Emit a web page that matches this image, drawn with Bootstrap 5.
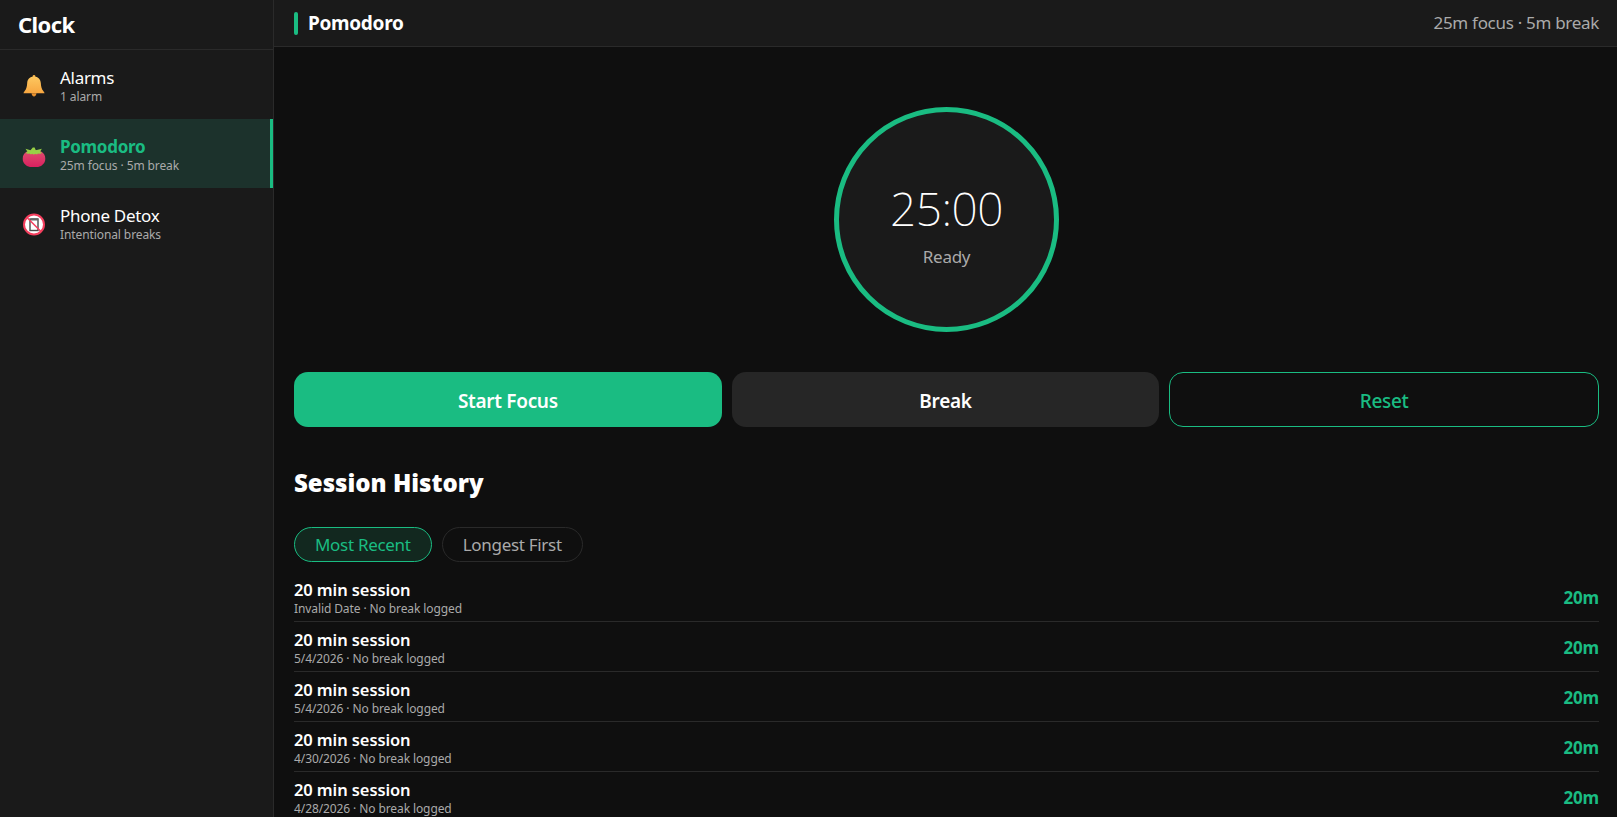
<!DOCTYPE html>
<html lang="en">
<head>
    <meta charset="UTF-8">
    <meta name="viewport" content="width=device-width, initial-scale=1.0">
    <title>Clock</title>
    <link href="https://cdn.jsdelivr.net/npm/bootstrap@5.3.0/dist/css/bootstrap.min.css" rel="stylesheet">
    <style>
        html, body {
            height: 100%;
            overflow: hidden;
        }
        body {
            background-color: #0f0f0f;
            color: #fff;
            font-family: "Noto Sans", "Open Sans", sans-serif;
        }
        .app-shell {
            height: 817px;
        }
        .side-panel {
            width: 274px;
            flex: 0 0 274px;
            background-color: #1a1a1a;
            border-right: 1px solid #2a2a2a;
        }
        .side-brand {
            height: 50px;
            padding: 0 18px;
            font-size: 22px;
            font-weight: 700;
            letter-spacing: -0.6px;
            border-bottom: 1px solid #2a2a2a;
        }
        .side-item {
            height: 69px;
            padding: 0 19px 0 22px;
            gap: 14px;
            border-right: 3px solid transparent;
        }
        .side-item.active-item {
            background-color: #1c322c;
            border-right-color: #1abc82;
        }
        .side-icon {
            width: 24px;
            height: 24px;
            flex: 0 0 24px;
            margin-top: 2px;
        }
        .side-text {
            padding-top: 2px;
        }
        .side-title {
            font-size: 17px;
            line-height: 22px;
            letter-spacing: -0.3px;
        }
        .active-item .side-title {
            color: #1abc82;
            font-weight: 700;
        }
        .side-sub {
            font-size: 12px;
            line-height: 16px;
            color: #aaa;
            letter-spacing: -0.1px;
        }
        .top-strip {
            height: 47px;
            padding: 0 18px 0 20px;
            background-color: #1a1a1a;
            border-bottom: 1px solid #2a2a2a;
        }
        .strip-mark {
            width: 4px;
            height: 23px;
            border-radius: 2px;
            background-color: #1abc82;
            margin-right: 10px;
        }
        .strip-title {
            font-size: 19px;
            font-weight: 700;
            letter-spacing: -0.3px;
        }
        .strip-meta {
            font-size: 17px;
            color: #aaa;
            letter-spacing: -0.3px;
        }
        .page-pad {
            padding: 0 18px 0 20px;
        }
        .timer-ring {
            width: 225px;
            height: 225px;
            margin: 60px auto 40px;
            padding-top: 11px;
            border: 5px solid #1abc82;
            border-radius: 50%;
            background-color: #1a1a1a;
        }
        .timer-value {
            font-size: 46px;
            font-weight: 200;
            line-height: 56px;
            letter-spacing: -0.5px;
        }
        .timer-state {
            font-size: 17px;
            color: #aaa;
            margin-top: 8px;
            letter-spacing: -0.3px;
        }
        .action-row {
            gap: 10px;
        }
        .action-btn {
            flex: 1 1 0;
            height: 55px;
            padding-top: 9px;
            border-radius: 14px;
            font-size: 19px;
            font-weight: 600;
            color: #fff;
            border: 0;
            letter-spacing: -0.3px;
        }
        .action-btn.focus-btn {
            background-color: #1abc82;
        }
        .action-btn.break-btn {
            background-color: #262626;
        }
        .action-btn.reset-btn {
            background-color: transparent;
            border: 1px solid #1abc82;
            color: #1abc82;
            font-weight: 500;
        }
        .history-title {
            font-size: 24px;
            font-weight: 900;
            line-height: 32px;
            margin: 40px 0 28px;
        }
        .sort-row {
            gap: 10px;
            margin-bottom: 10px;
        }
        .sort-pill {
            height: 35px;
            padding: 0 20px;
            border-radius: 18px;
            font-size: 17px;
            color: #aaa;
            border: 1px solid #2a2a2a;
            background-color: transparent;
            letter-spacing: -0.3px;
        }
        .sort-pill.picked {
            color: #1abc82;
            border-color: #1abc82;
            background-color: #12281f;
        }
        .history-row {
            height: 50px;
            border-bottom: 1px solid #2a2a2a;
        }
        .row-text {
            padding-top: 4px;
        }
        .row-title {
            font-size: 16.5px;
            font-weight: 600;
            line-height: 20px;
            letter-spacing: -0.1px;
        }
        .row-sub {
            margin-top: 1px;
            font-size: 12px;
            line-height: 16px;
            color: #aaa;
            letter-spacing: -0.1px;
        }
        .row-mins {
            padding-top: 2px;
            font-size: 17px;
            font-weight: 700;
            color: #1abc82;
            letter-spacing: -0.2px;
        }
    </style>
</head>
<body>
    <div class="app-shell d-flex">
        <aside class="side-panel d-flex flex-column">
            <div class="side-brand d-flex align-items-center">Clock</div>

            <div class="side-item d-flex align-items-center">
                <svg class="side-icon" viewBox="0 0 24 24">
                    <defs><linearGradient id="bellFill" x1="0" y1="0" x2="0" y2="1"><stop offset="0" stop-color="#fdc860"/><stop offset="1" stop-color="#f7a640"/></linearGradient></defs>
                    <circle cx="12" cy="2.400" r="1.400" fill="#f5b24a"/>
                    <path d="M12 2.500c-4.400 0-6.600 3-6.800 6.500-.2 3.600-.8 6-2.500 8.100-.7.900-1.200 1.600-1.200 2.200h21c0-.6-.5-1.300-1.200-2.200-1.700-2.100-2.300-4.500-2.500-8.100-.2-3.500-2.400-6.500-6.800-6.500z" fill="url(#bellFill)"/>
                    <path d="M9.500 19.300h5c-.2 1.900-1.200 3.200-2.500 3.200s-2.300-1.300-2.500-3.200z" fill="#e8912f"/>
                </svg>
                <div class="side-text">
                    <div class="side-title">Alarms</div>
                    <div class="side-sub">1 alarm</div>
                </div>
            </div>

            <div class="side-item active-item d-flex align-items-center">
                <svg class="side-icon" viewBox="0 0 24 24">
                    <defs><linearGradient id="tomatoFill" x1="0" y1="0" x2="0" y2="1"><stop offset="0" stop-color="#e04f70"/><stop offset="1" stop-color="#d81f5f"/></linearGradient></defs>
                    <path d="M12 7c5 0 11.300 1.800 11.300 8.700 0 5.500-5 8.800-11.300 8.800S.700 21.200.700 15.700C.700 8.800 7 7 12 7z" fill="url(#tomatoFill)"/>
                    <path d="M3.500 5.800l5 1.400 2.300-2.700h1.800l1.200 2.700 6-1.400-1.600 2.900 1.800 1.300c-1.400 1-2.800.6-4 .4-.9 1.200-2 1.200-2.800.3-.8 1.100-2.100 1.100-3 0-1 .8-2 .8-2.800-.1-1.200.3-2.600.3-3.700-.6l1.800-1.200z" fill="#98d046"/>
                </svg>
                <div class="side-text">
                    <div class="side-title">Pomodoro</div>
                    <div class="side-sub">25m focus · 5m break</div>
                </div>
            </div>

            <div class="side-item d-flex align-items-center">
                <svg class="side-icon" viewBox="0 0 24 24">
                    <circle cx="12" cy="12.500" r="10" fill="#fff" stroke="#f43f5e" stroke-width="2"/>
                    <rect x="8" y="7" width="8" height="11.500" fill="none" stroke="#4a4a4a" stroke-width="1.400"/>
                    <rect x="9" y="6.500" width="7" height="2" fill="#666"/>
                    <path d="M5 5.500l14 14" stroke="#f43f5e" stroke-width="1.500"/>
                </svg>
                <div class="side-text">
                    <div class="side-title">Phone Detox</div>
                    <div class="side-sub">Intentional breaks</div>
                </div>
            </div>
        </aside>

        <main class="flex-grow-1 d-flex flex-column overflow-hidden">
            <div class="top-strip d-flex align-items-center flex-shrink-0">
                <span class="strip-mark"></span>
                <span class="strip-title">Pomodoro</span>
                <span class="strip-meta ms-auto">25m focus · 5m break</span>
            </div>

            <div class="page-pad">
                <div class="timer-ring d-flex flex-column align-items-center justify-content-center">
                    <div class="timer-value">25:00</div>
                    <div class="timer-state">Ready</div>
                </div>

                <div class="action-row d-flex">
                    <button type="button" class="btn action-btn focus-btn">Start Focus</button>
                    <button type="button" class="btn action-btn break-btn">Break</button>
                    <button type="button" class="btn action-btn reset-btn">Reset</button>
                </div>

                <h2 class="history-title">Session History</h2>

                <div class="sort-row d-flex">
                    <button type="button" class="btn sort-pill picked">Most Recent</button>
                    <button type="button" class="btn sort-pill">Longest First</button>
                </div>

                <div id="historyList"></div>
            </div>
        </main>
    </div>

    <script>
        // Session rows
        const sessions = [
            'Invalid Date',
            '5/4/2026',
            '5/4/2026',
            '4/30/2026',
            '4/28/2026'
        ];

        document.getElementById('historyList').innerHTML = sessions.map(date => `
            <div class="history-row d-flex align-items-center justify-content-between">
                <div class="row-text">
                    <div class="row-title">20 min session</div>
                    <div class="row-sub">${date} · No break logged</div>
                </div>
                <div class="row-mins">20m</div>
            </div>
        `).join('');
    </script>

    <script src="https://cdn.jsdelivr.net/npm/bootstrap@5.3.0/dist/js/bootstrap.bundle.min.js"></script>
</body>
</html>
